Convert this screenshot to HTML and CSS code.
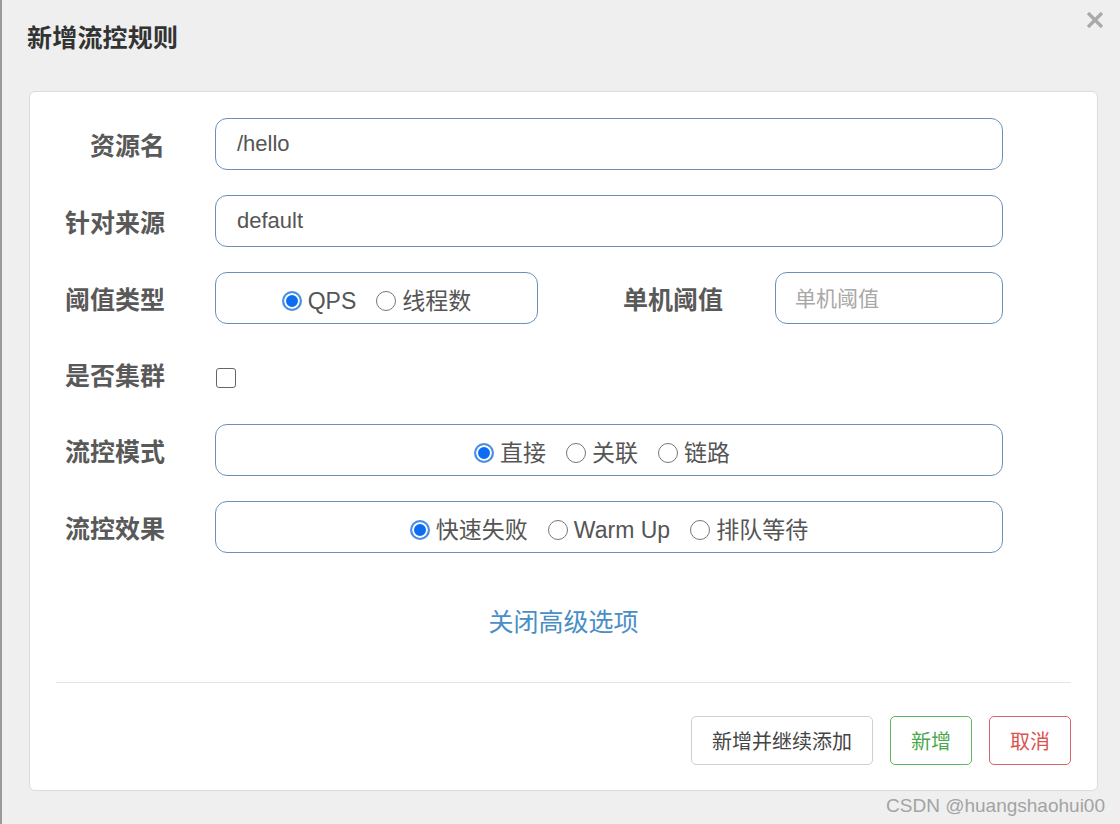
FILE: index.html
```html
<!DOCTYPE html>
<html lang="zh-CN">
<head>
<meta charset="utf-8">
<title>新增流控规则</title>
<link rel="stylesheet" href="styles.css">
</head>
<body>
<div class="page">
  <div class="header">
    <h1 class="title">新增流控规则</h1>
    <span class="close" aria-label="关闭">
      <svg width="18" height="18" viewBox="0 0 18 18"><path d="M2 2 L16 16 M16 2 L2 16" stroke="#a9a9a9" stroke-width="3.2" stroke-linecap="butt"/></svg>
    </span>
  </div>
  <div class="card">
    <div class="form">
      <div class="row">
        <label class="label">资源名</label>
        <div class="field wide"><span class="value">/hello</span></div>
      </div>
      <div class="row">
        <label class="label">针对来源</label>
        <div class="field wide"><span class="value">default</span></div>
      </div>
      <div class="row">
        <label class="label">阈值类型</label>
        <div class="field box-type">
          <div class="radios">
            <span class="opt"><span class="radio on"></span><span class="opt-text">QPS</span></span>
            <span class="opt"><span class="radio"></span><span class="opt-text">线程数</span></span>
          </div>
        </div>
        <label class="label label-inline">单机阈值</label>
        <div class="field box-count"><span class="placeholder">单机阈值</span></div>
      </div>
      <div class="row row-check">
        <label class="label">是否集群</label>
        <span class="checkbox"></span>
      </div>
      <div class="row">
        <label class="label">流控模式</label>
        <div class="field wide">
          <div class="radios radios-mode">
            <span class="opt"><span class="radio on"></span><span class="opt-text">直接</span></span>
            <span class="opt"><span class="radio"></span><span class="opt-text">关联</span></span>
            <span class="opt"><span class="radio"></span><span class="opt-text">链路</span></span>
          </div>
        </div>
      </div>
      <div class="row">
        <label class="label">流控效果</label>
        <div class="field wide">
          <div class="radios">
            <span class="opt"><span class="radio on"></span><span class="opt-text">快速失败</span></span>
            <span class="opt"><span class="radio"></span><span class="opt-text">Warm Up</span></span>
            <span class="opt"><span class="radio"></span><span class="opt-text">排队等待</span></span>
          </div>
        </div>
      </div>
      <div class="advanced"><a class="link">关闭高级选项</a></div>
    </div>
    <div class="divider"></div>
    <div class="footer">
      <button class="btn btn-default">新增并继续添加</button>
      <button class="btn btn-success">新增</button>
      <button class="btn btn-danger">取消</button>
    </div>
  </div>
  <div class="watermark">CSDN @huangshaohui00</div>
</div>
</body>
</html>
```
FILE: styles.css
```css
* { box-sizing: border-box; }
html, body { margin: 0; padding: 0; }
body {
  font-family: "Liberation Sans", "Noto Sans CJK SC", sans-serif;
  background: #efefef;
}
.page {
  position: relative;
  width: 1120px;
  height: 824px;
  background: #efefef;
  border-left: 2px solid #9a9a9a;
  overflow: hidden;
}
.header {
  height: 91px;
  display: flex;
  align-items: flex-start;
  justify-content: space-between;
  padding: 0 16px 0 25px;
}
.title {
  margin: 22px 0 0 0;
  font-size: 25px;
  line-height: 32px;
  font-weight: 700;
  color: #333;
  letter-spacing: 0.2px;
}
.close {
  margin-top: 11px;
  display: block;
  width: 18px;
  height: 18px;
}
.close svg { display: block; }
.card {
  margin-left: 27px;
  width: 1069px;
  height: 700px;
  background: #fff;
  border: 1px solid #dcdcdc;
  border-radius: 6px;
}
.form {
  padding-top: 26px;
  display: flex;
  flex-direction: column;
  gap: 25px;
}
.row {
  display: flex;
  align-items: center;
  height: 52px;
}
.row-check { height: 50px; }
.label {
  width: 135px;
  flex: none;
  text-align: right;
  font-size: 25px;
  line-height: 30px;
  font-weight: 700;
  color: #595959;
  margin-right: 50px;
  padding-top: 4px;
}
.label-inline {
  width: 102px;
  margin-left: 85px;
  text-align: left;
  white-space: nowrap;
}
.field {
  height: 52px;
  border: 1.5px solid #6a91b7;
  border-radius: 12px;
  display: flex;
  align-items: center;
  background: #fff;
  flex: none;
}
.wide { width: 788px; }
.box-type { width: 323px; }
.box-count { width: 228px; }
.value {
  padding-left: 21px;
  font-size: 22px;
  color: #555;
  line-height: 26px;
}
.placeholder {
  padding-left: 19px;
  font-size: 21px;
  color: #a8a8a8;
  line-height: 26px;
  padding-top: 2px;
}
.radios {
  flex: 1;
  display: flex;
  justify-content: center;
  align-items: center;
  gap: 20px;
  padding-top: 6px;
}
.radios-mode { padding-right: 14px; }
.opt {
  display: inline-flex;
  align-items: center;
  gap: 6px;
}
.opt-text {
  font-size: 23px;
  line-height: 26px;
  color: #555;
}
.radio {
  width: 20px;
  height: 20px;
  border-radius: 50%;
  border: 1.5px solid #767676;
  background: #fff;
  flex: none;
}
.radio.on {
  border: 2px solid #4a8fe6;
  background: #0b6ef2;
  box-shadow: inset 0 0 0 2px #fff;
}
.checkbox {
  display: block;
  width: 20px;
  height: 20px;
  margin-left: 1px;
  border: 1.5px solid #666;
  border-radius: 3px;
  background: #fff;
  margin-top: 7px;
}
.advanced {
  display: flex;
  justify-content: center;
  margin-top: 29px;
}
.link {
  font-size: 25px;
  line-height: 30px;
  color: #4a8ec6;
}
.divider {
  margin: 45px 26px 0 26px;
  height: 1px;
  background: #e4e4e4;
}
.footer {
  display: flex;
  justify-content: flex-end;
  gap: 17px;
  padding: 33px 26px 0 0;
}
.btn {
  height: 49px;
  padding: 0 20px;
  font-family: "Liberation Sans", "Noto Sans CJK SC", sans-serif;
  font-size: 20px;
  background: #fff;
  border-radius: 5px;
  cursor: pointer;
}
.btn-default { border: 1px solid #cfcfcf; color: #444; }
.btn-success { border: 1.5px solid #5cb85c; color: #4aa84a; }
.btn-danger { border: 1.5px solid #d9646a; color: #d9534f; }
.watermark {
  position: absolute;
  right: 15px;
  bottom: 6px;
  font-size: 19px;
  color: #a3a3a3;
  line-height: 24px;
}
```
